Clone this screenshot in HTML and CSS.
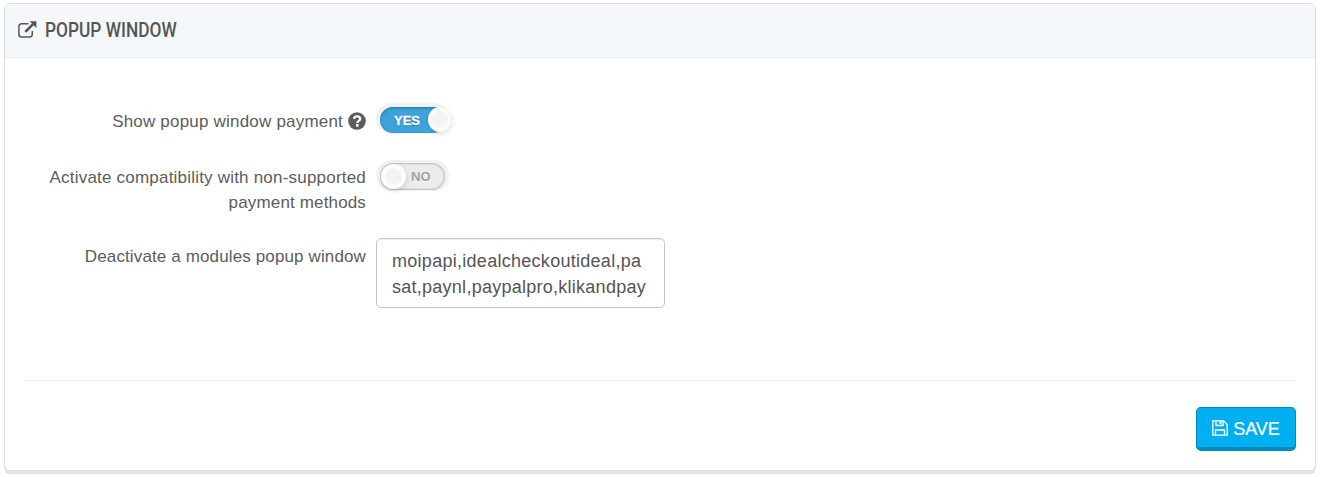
FILE: index.html
```html
<!DOCTYPE html>
<html lang="en">
<head>
<meta charset="utf-8">
<title>Popup window</title>
<link rel="stylesheet" href="styles.css">
</head>
<body>
<form class="panel">
  <header class="panel-heading">
    <svg class="icon-external" viewBox="0 0 19 17" width="19" height="17"><path d="M10.5 2.7H3.6A2.7 2.7 0 0 0 .9 5.4v8A2.7 2.7 0 0 0 3.6 16h8a2.7 2.7 0 0 0 2.7-2.7V10" fill="none" stroke="#555" stroke-width="1.5"/><path d="M7.3 10.9l8-8" stroke="#555" stroke-width="2.7"/><path d="M11.6.2h6.8V7z" fill="#555"/></svg>
    <h1 class="panel-title">POPUP WINDOW</h1>
  </header>
  <div class="panel-body">
    <div class="row row-show">
      <div class="label"><span class="t-show">Show popup window payment</span>
        <svg class="icon-help" viewBox="0 0 18 18" width="18" height="18"><circle cx="9" cy="9" r="8.8" fill="#5c5c5c"/><path d="M5.9 6.7C6.2 4.9 7.4 4.3 9 4.3c1.8 0 3.2 1 3.2 2.6 0 2-2.8 2-2.8 4" fill="none" stroke="#fff" stroke-width="2.3"/><path d="M8 12.1h2.6v2.5H8z" fill="#fff"/></svg>
      </div>
      <div class="switch"><div class="track on"><span>YES</span></div><i class="knob"></i></div>
    </div>
    <div class="row row-compat">
      <div class="label"><span class="t-compat">Activate compatibility with non-supported</span><br><span class="t-methods">payment methods</span></div>
      <div class="switch"><div class="track off"><span>NO</span></div><i class="knob left"></i></div>
    </div>
    <div class="row row-modules">
      <div class="label"><span class="t-modules">Deactivate a modules popup window</span></div>
      <div class="input"><span class="t-line1">moipapi,idealcheckoutideal,pa</span><br><span class="t-line2">sat,paynl,paypalpro,klikandpay</span></div>
    </div>
  </div>
  <footer class="panel-footer">
    <button class="save" type="button">
      <svg viewBox="0 0 16 16" width="16" height="16" fill="none" stroke="#fff" stroke-width="1.3"><path d="M.8.8h10.7l3.7 3.7v10.7H.8z"/><path d="M3.5 15v-5h9v5M4 1v4.5h7V1"/><path d="M7.5 1.2h2v3h-2z" fill="#fff" stroke="none"/></svg>
      <span>SAVE</span>
    </button>
  </footer>
</form>
</body>
</html>
```
FILE: styles.css
```css
* { box-sizing: border-box; }
body { margin: 0; height: 477px; padding: 3px 7px 0 4px; background: #fff; color: #5c5c5c; font-family: "Liberation Sans", Arial, sans-serif; font-size: 17px; }
.panel { margin: 0; height: 468px; border: 1px solid #dcdddf; border-radius: 6px; box-shadow: 0 3px 0 #e4e4e4; display: flex; flex-direction: column; }
.panel-heading { height: 54px; flex: none; background: #f5f8fb; border-bottom: 1px solid #e9ebed; border-radius: 5px 5px 0 0; display: flex; align-items: center; padding-left: 13px; gap: 8px; }
.icon-external { flex: none; margin-top: -2px; }
.panel-title { margin: -2px 0 0; font: 500 20px/24px Roboto, sans-serif; color: #555; white-space: nowrap; transform: scaleX(.866); transform-origin: left; }
.panel-body { flex: 1; padding-top: 45px; }
.row { display: flex; gap: 11px; align-items: flex-start; }
.label { width: 361px; text-align: right; line-height: 25px; white-space: nowrap; }
.row-show { height: 57px; }
.row-show .label { display: flex; justify-content: flex-end; align-items: center; gap: 5px; padding-top: 5px; }
.t-show { letter-spacing: .2px; padding-top: 1px; }
.t-compat { letter-spacing: .205px; }
.t-methods { letter-spacing: .15px; }
.t-modules { letter-spacing: .13px; }
.t-line1 { letter-spacing: .28px; }
.t-line2 { letter-spacing: .26px; }
.row-compat { height: 78px; }
.row-compat .label { padding-top: 5px; }
.row-modules .label { padding-top: 6px; }
.icon-help { flex: none; margin-top: 0; }
.switch { position: relative; width: 73px; height: 31px; padding: 4px 3px 0 4px; margin-left: -1px; border-radius: 16px; background: #f1f1f1; }
.row-compat .switch { padding-top: 3px; }
.track { width: 66px; height: 26px; border-radius: 13px; font-size: 13px; line-height: 27px; font-weight: bold; }
.on { background: #3fa2d8; color: #fff; padding-left: 14px; box-shadow: inset 0 1px 3px #1c74a5; text-shadow: 0 1px 1px #176894; -webkit-text-stroke: .3px #fff; }
.off { width: 65px; height: 27px; line-height: 28px; background: #ebeded; color: #a0a0a0; padding-left: 31px; box-shadow: inset 0 0 2px 1px #b9b9b9; text-shadow: 0 1px #fff; }
.knob { position: absolute; left: 52px; top: 4px; width: 23px; height: 25px; border-radius: 50%; background: radial-gradient(circle, #f3f3f3 0 7px, #fcfcfc 9px); box-shadow: 1px 2px 5px rgba(0,0,0,.12); }
.knob.left { left: 5px; width: 25px; }
.input { width: 289px; height: 70px; border: 1px solid #c7c7c7; border-radius: 5px; padding: 9px 15px; font-size: 18px; line-height: 26px; color: #555; white-space: nowrap; box-shadow: inset 0 1px 1px #eee; margin-left: -1px; }
.panel-footer { height: 90px; flex: none; margin: 0 19px 0 20px; border-top: 1px solid #eee; display: flex; justify-content: flex-end; padding-top: 26px; }
.save { width: 100px; height: 44px; border: 1px solid #008abd; border-bottom-width: 4px; border-radius: 5px; background: #00aff0; color: #fff; font: 18px "Liberation Sans", Arial, sans-serif; display: flex; align-items: center; justify-content: center; gap: 5px; padding: 2px 0 0; }
.save svg { margin-top: -1px; }
.save span { padding-top: 1px; -webkit-text-stroke: .2px #fff; }
```
